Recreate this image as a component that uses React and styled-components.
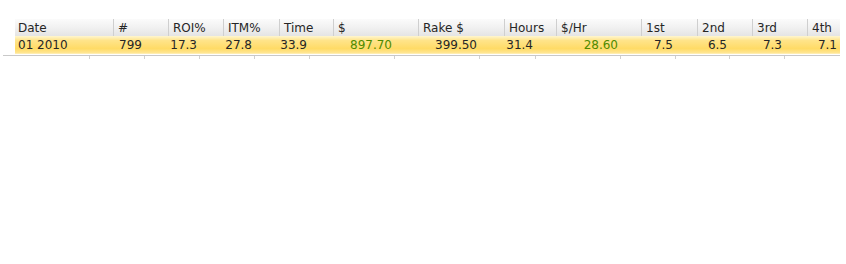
import React from 'react';
import styled, { createGlobalStyle } from 'styled-components';

const GlobalStyle = createGlobalStyle`
  html, body {
    margin: 0;
    padding: 0;
    background: #ffffff;
  }
  body {
    font-family: "DejaVu Sans", Verdana, sans-serif;
    font-size: 12px;
    color: #262626;
  }
`;

const headerCols = [
  { label: 'Date', w: 98 },
  { label: '#', w: 55 },
  { label: 'ROI%', w: 55 },
  { label: 'ITM%', w: 56 },
  { label: 'Time', w: 54 },
  { label: '$', w: 85 },
  { label: 'Rake $', w: 86 },
  { label: 'Hours', w: 52 },
  { label: '$/Hr', w: 85 },
  { label: '1st', w: 56 },
  { label: '2nd', w: 55 },
  { label: '3rd', w: 55 },
  { label: '4th', w: 33 },
];

const dataCols = [75, 55, 55, 55, 55, 85, 85, 56, 85, 55, 54, 55, 55];

const rows = [
  [
    { v: '01 2010', left: true },
    { v: '799' },
    { v: '17.3' },
    { v: '27.8' },
    { v: '33.9' },
    { v: '897.70', money: true },
    { v: '399.50' },
    { v: '31.4' },
    { v: '28.60', money: true },
    { v: '7.5' },
    { v: '6.5' },
    { v: '7.3' },
    { v: '7.1' },
  ],
];

const Page = styled.div`
  padding: 19px 0 0 3px;
  width: 837px;
`;

const Table = styled.div`
  margin-left: 12px;
  width: 825px;
`;

const HeaderRow = styled.div`
  display: grid;
  grid-template-columns: ${(p) => p.$cols.map((w) => `${w}px`).join(' ')};
  height: 17px;
  background: linear-gradient(to bottom, #fbfbfb 0%, #f1f1f1 50%, #e4e4e4 100%);
`;

const HeaderCell = styled.div`
  display: flex;
  align-items: center;
  padding-left: ${(p) => (p.$first ? '3px' : '4px')};
  border-left: ${(p) => (p.$first ? 'none' : '1px solid #cfcfcf')};
  white-space: nowrap;
  overflow: hidden;
`;

const DataRow = styled.div`
  display: grid;
  grid-template-columns: ${(p) => p.$cols.map((w) => `${w}px`).join(' ')};
  height: 18px;
  background: linear-gradient(
    to bottom,
    #fff6cf 0%,
    #ffe48a 25%,
    #ffdb66 70%,
    #ffe58f 92%,
    #fff1c0 100%
  );
`;

const DataCell = styled.div`
  display: flex;
  align-items: center;
  justify-content: ${(p) => (p.$left ? 'flex-start' : 'flex-end')};
  padding: ${(p) => (p.$left ? '0 0 0 3px' : '0 3px 0 0')};
  color: ${(p) => (p.$money ? '#4f8a00' : '#262626')};
  white-space: nowrap;
`;

const Footer = styled.div`
  margin-top: 1px;
  border-top: 1px solid #c9c9c9;
`;

const Ticks = styled.div`
  display: grid;
  grid-template-columns: ${(p) => p.$cols.map((w) => `${w}px`).join(' ')};
  margin-left: 12px;
  height: 3px;
`;

const Tick = styled.div`
  border-right: ${(p) => (p.$last ? 'none' : '1px solid #d0d0d0')};
`;

export default function App() {
  return (
    <>
      <GlobalStyle />
      <Page>
        <Table>
          <HeaderRow $cols={headerCols.map((c) => c.w)}>
            {headerCols.map((c, i) => (
              <HeaderCell key={c.label} $first={i === 0}>
                {c.label}
              </HeaderCell>
            ))}
          </HeaderRow>
          {rows.map((row, r) => (
            <DataRow key={r} $cols={dataCols}>
              {row.map((cell, i) => (
                <DataCell key={i} $left={cell.left} $money={cell.money}>
                  {cell.v}
                </DataCell>
              ))}
            </DataRow>
          ))}
        </Table>
        <Footer>
          <Ticks $cols={dataCols}>
            {dataCols.map((w, i) => (
              <Tick key={i} $last={i === dataCols.length - 1} />
            ))}
          </Ticks>
        </Footer>
      </Page>
    </>
  );
}
